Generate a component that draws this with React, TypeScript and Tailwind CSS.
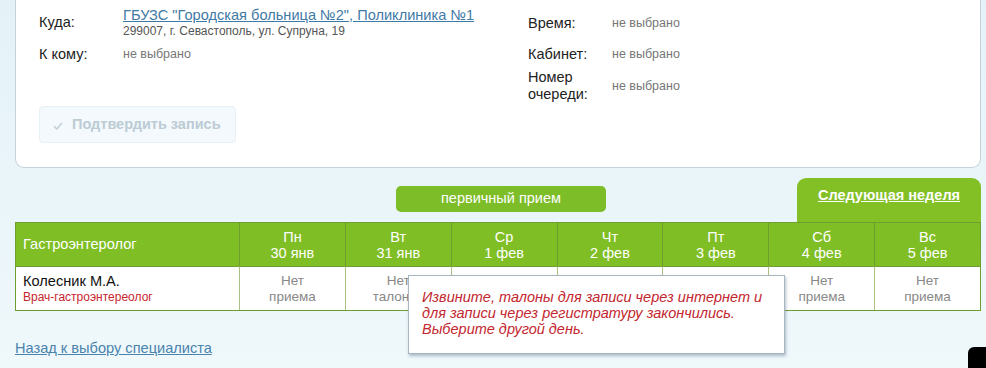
import React from 'react'

const days = [
  { d: 'Пн', date: '30 янв', a: 'Нет', b: 'приема' },
  { d: 'Вт', date: '31 янв', a: 'Нет', b: 'талонов' },
  { d: 'Ср', date: '1 фев', a: '', b: '' },
  { d: 'Чт', date: '2 фев', a: '', b: '' },
  { d: 'Пт', date: '3 фев', a: '', b: '' },
  { d: 'Сб', date: '4 фев', a: 'Нет', b: 'приема' },
  { d: 'Вс', date: '5 фев', a: 'Нет', b: 'приема' },
]

function Field({ label, children }: { label: React.ReactNode; children: React.ReactNode }) {
  return (
    <div className="flex items-center">
      <div className="w-[84px] shrink-0 text-[14.5px] leading-[17px] text-[#222]">{label}</div>
      <div className="text-[12px] leading-[18px]">{children}</div>
    </div>
  )
}

const empty = <span className="text-[12.5px] leading-[18px] text-[#777]">не выбрано</span>

export default function App() {
  return (
    <div
      className="relative w-[986px] h-[368px] overflow-hidden bg-gradient-to-b from-[#e4f2f8] to-[#eff8fb]"
      style={{ fontFamily: '"Liberation Sans", Arial, sans-serif' }}
    >
      {/* card with the chosen data */}
      <div className="ml-[15px] mr-[5px] h-[168px] rounded-b-[9px] border-x border-b border-[#c7d2d8] bg-white pl-[23px] pt-[6px]">
        <div className="flex">
          <div className="w-[489px] shrink-0">
            <Field label="Куда:">
              <a href="#" className="block text-[14.6px] leading-[18px] text-[#3f7aa6] underline">
                ГБУЗС "Городская больница №2", Поликлиника №1
              </a>
              <div className="text-[12px] leading-[15px] text-[#555]">299007, г. Севастополь, ул. Супруна, 19</div>
            </Field>
            <div className="mt-[6px]">
              <Field label="К кому:">{empty}</Field>
            </div>
            <button className="mt-[43px] flex h-[37px] w-[197px] items-center gap-[9px] rounded-[4px] border border-[#e6f0f5] bg-[#f3f9fc] pl-[13px] text-[14.5px] font-bold text-[#bccbd4]">
              <svg width="10" height="8" viewBox="0 0 10 8" className="mt-[2px]">
                <path d="M1 4.2 L3.8 7 L9 1" fill="none" stroke="#c3d1d9" strokeWidth="1.6" />
              </svg>
              Подтвердить запись
            </button>
          </div>
          <div className="pt-[8px]">
            <Field label="Время:">{empty}</Field>
            <div className="mt-[13px]">
              <Field label="Кабинет:">{empty}</Field>
            </div>
            <div className="mt-[6px]">
              <Field label={<>Номер<br />очереди:</>}>{empty}</Field>
            </div>
          </div>
        </div>
      </div>

      {/* type + week tab */}
      <div className="mt-[10px] ml-[15px] mr-[5px] flex h-[44px]">
        <div className="ml-[381px] mt-[8px] flex h-[26px] w-[210px] items-center justify-center rounded-[5px] bg-[#7dbd28] text-[14.5px] text-white">
          первичный прием
        </div>
        <div className="ml-auto flex w-[184px] justify-center rounded-t-[9px] bg-[#82c026] pt-[8px]">
          <a href="#" className="text-[14.5px] font-bold leading-[18px] text-white underline">Следующая неделя</a>
        </div>
      </div>

      {/* schedule table */}
      <div className="relative ml-[15px] mr-[5px]">
        <div className="grid grid-cols-[223px_repeat(7,1fr)] border border-[#6e9d30]">
          <div className="flex h-[43px] items-center bg-[#80be25] pl-[7px] text-[14.6px] text-white">Гастроэнтеролог</div>
          {days.map((d) => (
            <div key={d.d} className="flex h-[43px] flex-col items-center justify-center border-l border-[#6e9d30] bg-[#80be25] text-[14.5px] leading-[16px] text-white">
              <span>{d.d}</span>
              <span>{d.date}</span>
            </div>
          ))}
          <div className="flex h-[44px] flex-col justify-center border-t border-[#6e9d30] bg-white pl-[7px]">
            <span className="text-[14.6px] leading-[16px] text-[#111]">Колесник М.А.</span>
            <span className="text-[12px] leading-[16px] text-[#c7262e]">Врач-гастроэнтереолог</span>
          </div>
          {days.map((d) => (
            <div key={d.d + 'r'} className="flex h-[44px] flex-col items-center justify-center border-l border-t border-[#a9c07f] border-t-[#6e9d30] bg-white text-[13.5px] leading-[16px] text-[#888]">
              <span>{d.a}</span>
              <span>{d.b}</span>
            </div>
          ))}
        </div>

        {/* tooltip */}
        <div className="absolute left-[393px] top-[53px] h-[79px] w-[377px] border border-[#a6b7c3] bg-white pl-[13px] pt-[13px] text-[14.5px] italic leading-[16px] text-[#c3262e] shadow-[1px_2px_3px_rgba(90,110,130,0.45)]">
          Извините, талоны для записи через интернет и<br />
          для записи через регистратуру закончились.<br />
          Выберите другой день.
        </div>
      </div>

      <a href="#" className="mt-[28px] ml-[15px] block w-fit text-[14.6px] leading-[18px] text-[#4a83ad] underline">
        Назад к выбору специалиста
      </a>

      <div className="absolute bottom-0 right-0 h-[21px] w-[18px] rounded-tl-[6px] bg-black" />
    </div>
  )
}
